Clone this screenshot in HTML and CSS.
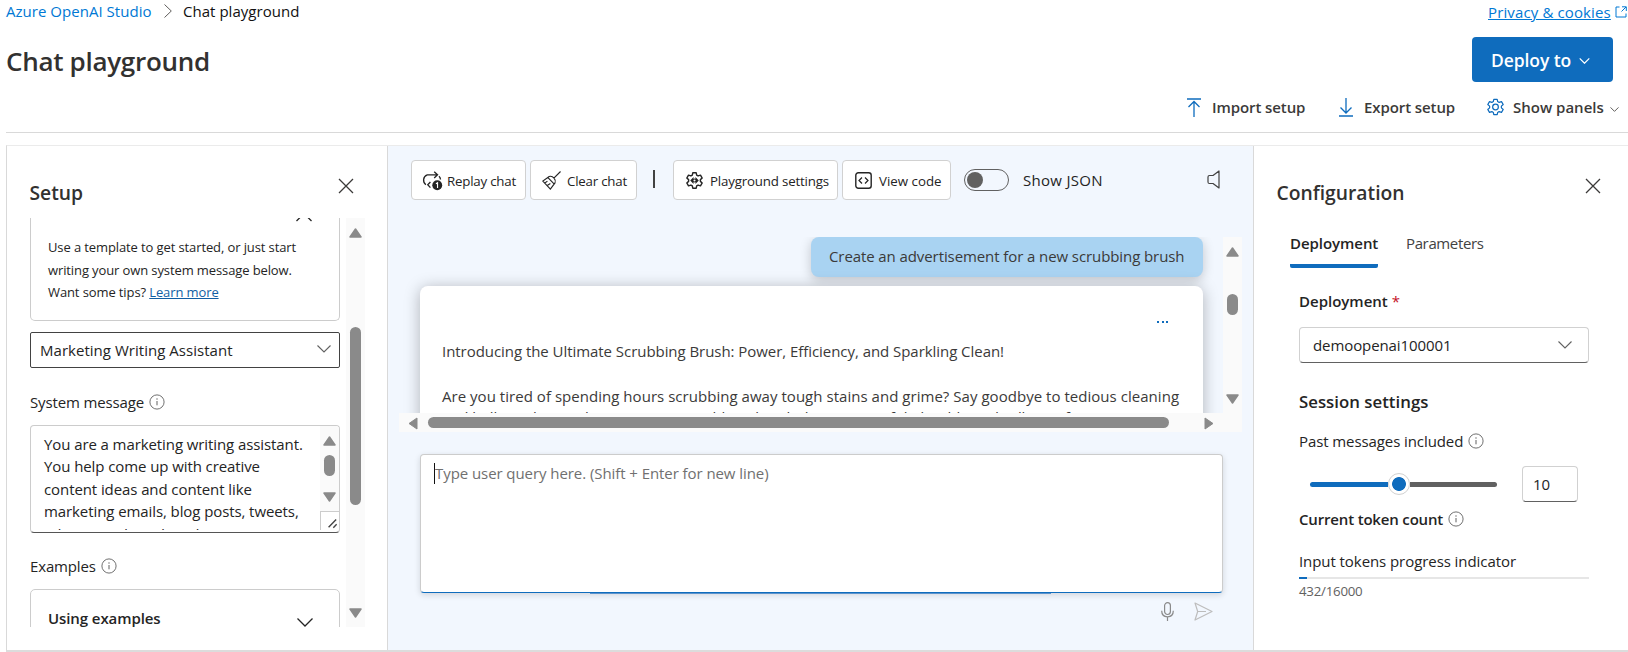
FILE: index.html
```html
<!DOCTYPE html>
<html lang="en">
<head>
<meta charset="utf-8">
<title>Chat playground</title>
<link rel="stylesheet" href="styles.css">
</head>
<body>
<svg class="defs" width="0" height="0">
  <symbol id="info" viewBox="0 0 16 16"><circle cx="8" cy="8" r="7.1" fill="none" stroke="#616161" stroke-width="0.9"/><path d="M8 7v4.3" stroke="#616161" stroke-width="1"/><circle cx="8" cy="5" r=".7" fill="#616161"/></symbol>
  <symbol id="close" viewBox="0 0 16 16"><path d="M1 1l14 14M15 1L1 15" fill="none" stroke="#3b3a39" stroke-width="1.3"/></symbol>
  <symbol id="chev" viewBox="0 0 14 8"><path d="M.5 .5L7 7L13.500 .5" fill="none" stroke="currentColor" stroke-width="1.1"/></symbol>
  <symbol id="chev-bold" viewBox="0 0 14 8"><path d="M.5 .5L7 7L13.500 .5" fill="none" stroke="currentColor" stroke-width="1.600"/></symbol>
  <symbol id="tri" viewBox="0 0 13 10"><path d="M6.500 1L12 9H1z" fill="#8a8a8a" stroke="#8a8a8a" stroke-width="1.500" stroke-linejoin="round"/></symbol>
  <symbol id="gear" viewBox="0 0 20 20"><path d="M8.200 1h3.600l.5 2.400 1.500.9 2.500-.8 1.800 3-1.900 1.700v1.800l1.900 1.700-1.800 3-2.500-.8-1.500.9-.5 2.400H8.200l-.5-2.400-1.500-.9-2.500.8-1.800-3 1.900-1.700V8.200L1.900 6.500l1.800-3 2.500.8 1.500-.9z" transform="translate(0 .9)" fill="none" stroke="currentColor" stroke-linejoin="round"/></symbol>
</svg>

<header class="header">
  <div class="crumbs">
    <a class="crumb-link">Azure OpenAI Studio</a>
    <svg class="crumb-sep" viewBox="0 0 8 14"><path d="M.5.5L7.300 7L.5 13.500" fill="none" stroke="#605e5c"/></svg>
    <span class="crumb-here">Chat playground</span>
    <a class="privacy">Privacy &amp; cookies</a>
    <svg class="ext" viewBox="0 0 12 12"><path d="M4.500 1H1v10h10V7.500M7 .8h4.300V5M11 1L6.500 5.500" fill="none" stroke="#0078d4"/></svg>
  </div>
  <div class="title-row">
    <h1>Chat playground</h1>
    <button class="deploy"><span>Deploy to</span><svg viewBox="0 0 14 8"><use href="#chev-bold"/></svg></button>
  </div>
  <div class="actions">
    <svg class="a-ico" viewBox="0 0 14 19"><path d="M0 1h14M7 19V3.500M1.500 9L7 3.500L12.500 9" fill="none" stroke="#0f6cbd" stroke-width="1.300"/></svg>
    <span class="a-import">Import setup</span>
    <svg class="a-ico" viewBox="0 0 14 19"><path d="M0 18h14M7 0v14.500M1.500 9.500L7 15l5.500-5.500" fill="none" stroke="#0f6cbd" stroke-width="1.300"/></svg>
    <span class="a-export">Export setup</span>
    <svg class="a-gear" viewBox="0 0 20 20"><use href="#gear" stroke-width="1.300"/><circle cx="10" cy="10" r="3" fill="none" stroke="currentColor" stroke-width="1.300"/></svg>
    <span class="a-panels">Show panels</span>
    <svg class="a-chev" viewBox="0 0 14 8"><use href="#chev-bold"/></svg>
  </div>
</header>

<main class="panels">
  <section class="setup">
    <div class="panel-head"><h2 class="t-setup">Setup</h2><svg class="close"><use href="#close"/></svg></div>
    <div class="setup-scroll">
      <div class="setup-content">
        <div class="template">
          <svg class="tpl-chev" viewBox="0 0 16 8"><path d="M.5 8L8 .5L15.500 8" fill="none" stroke="#242424" stroke-width="1.300"/></svg>
          <div class="tpl1">Use a template to get started, or just start</div>
          <div class="tpl2">writing your own system message below.</div>
          <div class="tpl3">Want some tips? <a>Learn more</a></div>
        </div>
        <div class="tpl-select"><span>Marketing Writing Assistant</span><svg><use href="#chev"/></svg></div>
        <div class="label sys"><span>System message</span><svg class="info"><use href="#info"/></svg></div>
        <div class="sysbox">
          <div class="systext">
            <div>You are a marketing writing assistant.</div>
            <div>You help come up with creative</div>
            <div>content ideas and content like</div>
            <div>marketing emails, blog posts, tweets,</div>
            <div>ad copy and product descriptions.</div>
          </div>
          <div class="sysbar">
            <div class="systrack"><svg class="tri"><use href="#tri"/></svg><i></i><svg class="tri down"><use href="#tri"/></svg></div>
            <svg class="grip" viewBox="0 0 19 19"><path d="M8 16L16 8M13 16.500L16.500 13" stroke="#444" stroke-width="1.500"/></svg>
          </div>
        </div>
        <div class="label ex"><span>Examples</span><svg class="info"><use href="#info"/></svg></div>
        <div class="excard"><span>Using examples</span><svg viewBox="0 0 16 11"><path d="M.5.5L8 8L15.500.5" fill="none" stroke="#242424" stroke-width="1.300"/></svg></div>
      </div>
      <div class="vbar"><svg class="tri"><use href="#tri"/></svg><i></i><svg class="tri down"><use href="#tri"/></svg></div>
    </div>
  </section>

  <section class="chat">
    <div class="tools">
      <button class="b-replay"><svg viewBox="0 0 20 20"><path d="M3 14.500C-.5 12 -.2 5.500 4.500 4h11M11.800 .8L15.300 4l-3.500 3.300M7.800 11.500L5 14.500l2.800 3M16.800 5.500c1.100 1 1.600 2.200 1.600 3.500" fill="none" stroke="#242424" stroke-width="1.400"/><circle cx="15" cy="15" r="5.200" fill="#242424"/><path d="M13.600 13.400l1.700-1V18" stroke="#fff" fill="none" stroke-width="1.200"/></svg><span>Replay chat</span></button>
      <button class="b-clear"><svg viewBox="0 0 20 20"><path d="M19.500 .5l-7 7M7.500 5.800c2-.7 4.200 .6 5.200 1.800s1.900 3 1 5L8.800 19 .9 10.600zM6 6.800l7.200 7.200M3 12.500l2.700-1.800M5.500 15.300l3.300-2.200" fill="none" stroke="#242424" stroke-width="1.200"/></svg><span>Clear chat</span></button>
      <div class="divider"></div>
      <button class="b-play"><svg viewBox="0 0 20 20"><use href="#gear" stroke-width="1.500"/><path d="M9 6.300L5.500 10L9 13.700zM11 6.300l3.500 3.700-3.500 3.700z" fill="#242424"/><circle cx="10" cy="10" r="2" fill="#242424"/><circle cx="10" cy="10" r="1.100" fill="#fff"/></svg><span>Playground settings</span></button>
      <button class="b-code"><svg viewBox="0 0 17 17"><rect x=".8" y=".8" width="15.400" height="15.400" rx="2.500" fill="none" stroke="#242424" stroke-width="1.400"/><path d="M7 5.500l-3 3 3 3M10 5.500l3 3-3 3" fill="none" stroke="#242424" stroke-width="1.200"/></svg><span>View code</span></button>
      <div class="toggle"><i></i></div>
      <span class="json">Show JSON</span>
      <svg class="speaker" viewBox="0 0 13 19"><path d="M12 1v17L6 13.500H2.500Q1 13.500 1 12V7Q1 5.500 2.500 5.500H6z" fill="none" stroke="#424242" stroke-width="1.200" stroke-linejoin="round"/></svg>
    </div>
    <div class="chatview">
      <div class="messages">
        <div class="bubble"><span>Create an advertisement for a new scrubbing brush</span></div>
        <div class="reply">
          <div class="dots"><i></i><i></i><i></i></div>
          <p class="r1">Introducing the Ultimate Scrubbing Brush: Power, Efficiency, and Sparkling Clean!</p>
          <p class="r2">Are you tired of spending hours scrubbing away tough stains and grime? Say goodbye to tedious cleaning</p>
          <p class="r3">and hello to the revolutionary new scrubbing brush that is powerful, durable and will transform</p>
        </div>
      </div>
      <div class="chat-vbar"><svg class="tri"><use href="#tri"/></svg><i></i><svg class="tri down"><use href="#tri"/></svg></div>
      <div class="chat-hbar"><svg class="htri" viewBox="0 0 10 13"><path d="M9 1v11L1 6.500z" fill="#8a8a8a" stroke="#8a8a8a" stroke-linejoin="round"/></svg><i></i><svg class="htri" viewBox="0 0 10 13"><path d="M1 1v11l8-5.500z" fill="#8a8a8a" stroke="#8a8a8a" stroke-linejoin="round"/></svg></div>
    </div>
    <div class="query"><b></b><span>Type user query here. (Shift + Enter for new line)</span><em></em></div>
    <div class="sendrow">
      <svg class="mic" viewBox="0 0 13 19"><rect x="3.600" y=".7" width="5.800" height="11.800" rx="2.900" fill="none" stroke="#8a8a8a" stroke-width="1.200"/><path d="M.7 8.800c0 3.800 2.300 6 5.800 6s5.800-2.200 5.800-6M6.500 15v4" fill="none" stroke="#8a8a8a" stroke-width="1.200"/></svg>
      <svg class="send" viewBox="0 0 19 19"><path d="M1 1l17 8.500L1 18l2.700-8.500zM3.700 9.500H12" fill="none" stroke="#bdbdbd" stroke-width="1.200" stroke-linejoin="round"/></svg>
    </div>
  </section>

  <section class="config">
    <div class="panel-head"><h2 class="t-config">Configuration</h2><svg class="close"><use href="#close"/></svg></div>
    <div class="tabs"><span class="tab on">Deployment</span><span class="tab">Parameters</span></div>
    <div class="fields">
      <div class="dep-label"><span>Deployment</span> <em>*</em></div>
      <div class="dep-select"><span>demoopenai100001</span><svg><use href="#chev"/></svg></div>
      <h3>Session settings</h3>
      <div class="label past"><span>Past messages included</span><svg class="info"><use href="#info"/></svg></div>
      <div class="slider-row"><div class="slider"><i></i><b></b><u></u></div><div class="num">10</div></div>
      <div class="label count"><span>Current token count</span><svg class="info"><use href="#info"/></svg></div>
      <div class="ind">Input tokens progress indicator</div>
      <div class="bar"><i></i></div>
      <div class="total">432/16000</div>
    </div>
  </section>
</main>
</body>
</html>
```
FILE: styles.css
```css
* { box-sizing: border-box; }
body {
  margin: 0; width: 1628px; height: 652px; overflow: hidden; background: #fff;
  font-family: "Open Sans", "Noto Sans", sans-serif; font-size: 15px; line-height: 22px;
  color: #242424; letter-spacing: -0.09px; white-space: nowrap;
}
h1, h2, h3, p { margin: 0; font-weight: 600; }
svg { display: block; flex: none; overflow: visible; }
.defs { display: none; }
button { font: inherit; letter-spacing: inherit; color: inherit; padding: 0; }

.header { height: 133px; margin-left: 6px; border-bottom: 1px solid #d9d9d9; display: flex; flex-direction: column; }
.crumbs { height: 24px; display: flex; align-items: flex-start; color: #111; }
.crumb-link { color: #0078d4; width: 146px; letter-spacing: 0.03px; }
.crumb-sep { width: 8px; height: 14px; margin: 4px 11px 0 12px; }
.crumb-here { flex: 1; letter-spacing: 0.03px; }
.privacy { color: #0078d4; text-decoration: underline; margin: 1px 5px 0 0; width: 122px; letter-spacing: 0.13px; }
.ext { width: 12px; height: 12px; margin: 6px 1px 0 0; }
.title-row { margin-top: 13px; height: 45px; display: flex; justify-content: space-between; padding-right: 15px; }
h1 { font-size: 26px; line-height: 48px; color: #323130; letter-spacing: -0.3px; }
.deploy { width: 141px; height: 45px; border: 0; border-radius: 4px; background: #0f6cbd; color: #fff; font-size: 17.5px; font-weight: 600; display: flex; align-items: center; padding-left: 19px; }
.deploy span { width: 88px; text-align: left; }
.deploy svg { width: 11px; height: 6px; margin-top: 3px; }
.actions { height: 50px; display: flex; align-items: center; justify-content: flex-end; font-weight: 600; color: #3b3a39; padding-right: 9px; }
.a-ico { width: 14px; height: 19px; margin-right: 11px; color: #0f6cbd; }
.a-import { width: 127px; }
.a-export { width: 122px; }
.a-gear { width: 19px; height: 20px; margin-right: 8px; color: #0f6cbd; }
.a-panels { width: 97px; letter-spacing: 0; }
.a-chev { width: 9px; height: 5px; margin-top: 4px; color: #605e5c; }

.panels { margin: 12px 0 0 6px; height: 507px; border: solid; border-width: 1px 0 2px 1px; border-color: #ebebeb #d9d9d9 #dcdcdc #d9d9d9; display: flex; }
.panel-head { display: flex; justify-content: space-between; height: 72px; padding-top: 32px; }
h2 { font-size: 19.3px; line-height: 30px; color: #323130; letter-spacing: 0; margin-left: -0.5px; }
.close { width: 16px; height: 16px; margin-top: 0; }
.info { width: 16px; height: 16px; }
.label { display: flex; align-items: center; height: 22px; gap: 5px; }

.setup { width: 381px; border-right: 1px solid #d9d9d9; padding-left: 23px; }
.setup .panel-head { padding-right: 33px; }
.setup-scroll { display: flex; height: 409px; overflow: hidden; gap: 6px; }
.setup-content { width: 310px; }
.template { display: flow-root; height: 103px; border: 1px solid #ccc; border-top: 0; border-radius: 0 0 5px 5px; padding: 0 27px 0 17px; font-size: 13px; line-height: 22.5px; letter-spacing: -0.11px; }
.tpl-chev { width: 16px; height: 8px; margin: -5px 0 0 248px; }
.tpl1 { margin-top: 15px; }
.template a { color: #115ea3; text-decoration: underline; }
.tpl-select { margin-top: 11px; height: 36px; border: 1px solid #424242; border-radius: 2px; display: flex; align-items: center; justify-content: space-between; padding: 0 8px 0 9px; letter-spacing: 0.03px; }
.tpl-select svg { width: 14px; height: 8px; margin-top: -3px; color: #616161; }
.sys { margin-top: 23px; letter-spacing: -0.13px; }
.sysbox { margin-top: 12px; height: 108px; border: 1px solid #ccc; border-bottom: 1px solid #555; border-radius: 4px; display: flex; justify-content: space-between; overflow: hidden; }
.systext { padding: 7px 0 0 13px; line-height: 22.4px; height: 104px; overflow: hidden; }
.sysbar { width: 19px; }
.systrack { height: 85px; background: #fafafa; display: flex; flex-direction: column; align-items: center; padding: 10px 0 9px; justify-content: space-between; }
.systrack i { width: 11px; height: 21px; border-radius: 6px; background: #8a8a8a; margin-bottom: 7px; }
.tri { width: 13px; height: 10px; }
.down { transform: rotate(180deg); }
.grip { width: 19px; height: 19px; border: solid #ccc; border-width: 1px 0 0 1px; }
.ex { margin-top: 22px; letter-spacing: -0.15px; }
.excard { margin-top: 12px; height: 60px; border: 1px solid #ccc; border-radius: 5px; display: flex; justify-content: space-between; padding: 17px 26px 0 17px; font-weight: 600; }
.excard svg { width: 16px; height: 11px; margin-top: 11px; }
.vbar { width: 19px; background: #fafafa; display: flex; flex-direction: column; align-items: center; padding: 10px 0 9px; }
.vbar i { width: 11px; height: 178px; margin: 89px 0 103px; border-radius: 6px; background: #8a8a8a; }

.chat { width: 866px; background: #f2f7fe; border-right: 1px solid #d9d9d9; }
.tools { height: 91px; padding: 14px 0 0 23px; display: flex; align-items: flex-start; }
.tools button { height: 40px; border: 1px solid #d1d1d1; border-radius: 4px; background: #fff; display: flex; align-items: center; font-size: 13.3px; letter-spacing: -0.22px; }
.tools button svg { width: 19px; height: 19px; }
.tools button span { margin-top: 1px; }
.tools .b-replay { width: 115px; margin-right: 4px; padding-left: 11px; gap: 5px; }
.tools .b-clear { width: 107px; padding-left: 11px; gap: 6px; }
.divider { width: 2px; height: 18px; margin: 10px 18px 0 16px; background: #424242; }
.tools .b-play { width: 165px; margin-right: 4px; padding-left: 11px; gap: 6px; letter-spacing: -0.18px; }
.tools .b-code { width: 109px; padding-left: 12px; gap: 7px; letter-spacing: 0; }
.tools .b-code svg { width: 17px; height: 17px; }
.toggle { width: 45px; height: 22px; margin: 9px 14px 0 13px; border: 1px solid #616161; border-radius: 11px; padding: 2px; }
.toggle i { display: block; width: 16px; height: 16px; border-radius: 50%; background: #616161; }
.json { width: 184px; margin-top: 9px; letter-spacing: 0.3px; }
.speaker { width: 13px; height: 19px; margin-top: 10px; }
.chatview { margin-left: 11px; width: 843px; height: 195px; display: grid; grid-template: 176px 19px / 824px 19px; overflow: hidden; }
.messages { overflow: hidden; padding: 0 20px 0 21px; color: #3b3a39; }
.bubble { width: 392px; height: 40px; margin-left: auto; border-radius: 8px; background: #a9d3f2; box-shadow: 0 3px 12px rgba(0,0,0,.2); padding: 8px 18px; }
.reply { margin-top: 9px; height: 200px; border-radius: 8px; background: #fff; box-shadow: 0 2px 16px rgba(0,0,0,.28); padding: 35px 22px 0; position: relative; }
.dots { display: flex; gap: 2.500px; justify-content: flex-end; padding-right: 13px; height: 19px; }
.dots i { width: 2px; height: 2px; background: #0f6cbd; }
.reply p { font-weight: 400; line-height: 22.5px; }
.r1 { letter-spacing: -0.05px; }
.r2 { padding-top: 22.5px; letter-spacing: 0.035px; }
.reply .r3 { margin-top: -2px; }
.chat-vbar { background: #fafafa; display: flex; flex-direction: column; align-items: center; padding-top: 10px; }
.chat-vbar i { width: 11px; height: 21px; margin: 37px 0 79px; border-radius: 6px; background: #8a8a8a; }
.chat-hbar { grid-column: 1 / 3; background: #fafafa; display: flex; padding: 4px 0 0 9px; }
.htri { width: 10px; height: 13px; }
.chat-hbar i { width: 741px; height: 11px; margin: 0 35px 0 10px; border-radius: 6px; background: #8a8a8a; }
.query { margin: 22px 0 0 32px; width: 803px; height: 139px; border: 1px solid #ccc; border-bottom-color: #0f6cbd; border-radius: 4px; background: #fff; box-shadow: 0 2px 6px rgba(0,0,0,.14); color: #707070; padding: 8px 0 0 13px; display: flex; position: relative; letter-spacing: -0.07px; }
.query b { width: 1px; height: 21px; background: #111; }
.query span { margin-top: -1px; }
.query em { position: absolute; left: 169px; bottom: -2px; width: 461px; height: 1px; background: #5b93cc; }
.sendrow { display: flex; justify-content: flex-end; padding: 9px 40px 0 0; gap: 20px; }
.mic { width: 13px; height: 19px; }
.send { width: 19px; height: 19px; }

.config { flex: 1; padding-left: 23px; }
.config .panel-head { padding-right: 27px; }
.tabs { display: flex; margin-left: 13px; height: 50px; padding-top: 14px; gap: 28px; }
.tab { height: 36px; color: #424242; letter-spacing: -0.37px; }
.on { width: 88px; letter-spacing: -0.05px; color: #242424; font-weight: 600; border-bottom: 4px solid #0f6cbd; border-radius: 0 0 2px 2px; }
.fields { padding: 22px 0 0 22px; }
.dep-label { height: 22px; font-weight: 600; letter-spacing: 0; }
.dep-label em { color: #c50f1f; font-weight: 400; font-style: normal; }
.dep-select { margin-top: 15px; width: 290px; height: 36px; border: 1px solid #d1d1d1; border-bottom-color: #616161; border-radius: 4px; display: flex; align-items: center; justify-content: space-between; padding: 0 16px 0 13px; }
.dep-select svg { width: 14px; height: 8px; color: #616161; }
h3 { margin-top: 28px; font-size: 16.8px; letter-spacing: 0.02px; }
.past { margin-top: 17px; }
.slider-row { display: flex; margin-top: 14px; }
.slider { width: 187px; height: 36px; margin: 0 25px 0 11px; display: flex; align-items: center; }
.slider i { width: 78px; height: 5px; background: #0f6cbd; border-radius: 3px 0 0 3px; }
.slider b { width: 22px; height: 22px; border: 1px solid #d1d1d1; border-radius: 50%; background: radial-gradient(circle, #0f6cbd 6.500px, #fff 7.300px); }
.slider u { flex: 1; height: 5px; background: #616161; border-radius: 0 3px 3px 0; }
.num { width: 56px; height: 36px; border: 1px solid #d1d1d1; border-bottom-color: #616161; border-radius: 4px; line-height: 34px; padding-left: 10px; }
.count { margin-top: 6px; font-weight: 600; letter-spacing: -0.17px; }
.ind { margin-top: 20px; letter-spacing: -0.07px; }
.bar { margin-top: 5px; width: 290px; height: 2px; background: #e6e6e6; }
.bar i { display: block; width: 8px; height: 2px; background: #0f6cbd; }
.total { margin-top: 1px; font-size: 13.3px; letter-spacing: -0.25px; color: #616161; }
```
